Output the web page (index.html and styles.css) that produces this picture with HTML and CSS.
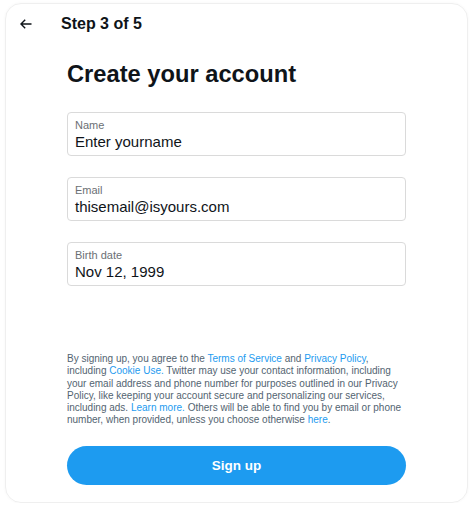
FILE: index.html
```html
<!DOCTYPE html>
<html lang="en">

<head>
    <meta charset="UTF-8" />
    <title>Create your account</title>
    <link rel="stylesheet" href="styles.css">
</head>

<body>

    <div class="card">
        <div class="top">
            <svg class="back" width="12" height="10" viewBox="0 0 12 10">
                <path d="M11.5 5H1M5.2 0.8L1 5l4.2 4.2" fill="none" stroke="#0f1419" stroke-width="1.4" />
            </svg>
            <span class="step">Step 3 of 5</span>
        </div>

        <div class="content">
            <h1>Create your account</h1>

            <div class="field">
                <label>Name</label>
                <div class="value">Enter yourname</div>
            </div>

            <div class="field">
                <label>Email</label>
                <div class="value">thisemail@isyours.com</div>
            </div>

            <div class="field">
                <label>Birth date</label>
                <div class="value">Nov 12, 1999</div>
            </div>

            <p class="legal">
                By signing up, you agree to the <a href="#">Terms of Service</a> and <a href="#">Privacy Policy</a>,<br>
                including <a href="#">Cookie Use.</a> Twitter may use your contact information, including<br>
                your email address and phone number for purposes outlined in our Privacy<br>
                Policy, like keeping your account secure and personalizing our services,<br>
                including ads. <a href="#">Learn more.</a> Others will be able to find you by email or phone<br>
                number, when provided, unless you choose otherwise <a href="#">here</a>.
            </p>

            <button class="signup">Sign up</button>
        </div>
    </div>

</body>

</html>
```

FILE: styles.css
```css
body {
    margin: 0;
    background: #fff;
    font-family: "Liberation Sans", Arial, sans-serif;
    color: #0f1419;
}

/* outer card */
.card {
    box-sizing: border-box;
    width: 463px;
    height: 500px;
    margin: 3px 0 0 5px;
    border: 1px solid #efefef;
    border-radius: 16px;
    box-shadow: 0 0 3px rgba(0, 0, 0, 0.04);
}

.top {
    display: flex;
    align-items: center;
    height: 40px;
    padding-left: 14px;
}

.back {
    display: block;
}

.step {
    margin-left: 29px;
    font-size: 16px;
    font-weight: bold;
}

.content {
    padding: 0 61px;
}

h1 {
    margin: 15px 0 23px;
    font-size: 23.7px;
    line-height: 30px;
    font-weight: bold;
}

/* input boxes */
.field {
    box-sizing: border-box;
    height: 44px;
    margin-bottom: 21px;
    padding: 6px 7px 0;
    border: 1px solid #dadada;
    border-radius: 4px;
}

.field label {
    display: block;
    font-size: 11px;
    line-height: 13px;
    color: #6b6f74;
}

.field .value {
    font-size: 15px;
    line-height: 20px;
}

.legal {
    margin: 67px 0 0;
    font-size: 10px;
    line-height: 12.3px;
    color: #536471;
    white-space: nowrap;
}

.legal a {
    color: #1d9bf0;
    text-decoration: none;
}

.signup {
    display: block;
    width: 100%;
    height: 39px;
    margin-top: 19px;
    border: none;
    border-radius: 20px;
    background: #1d9bf0;
    color: #fff;
    font-family: inherit;
    font-size: 13.5px;
    font-weight: bold;
}
```
